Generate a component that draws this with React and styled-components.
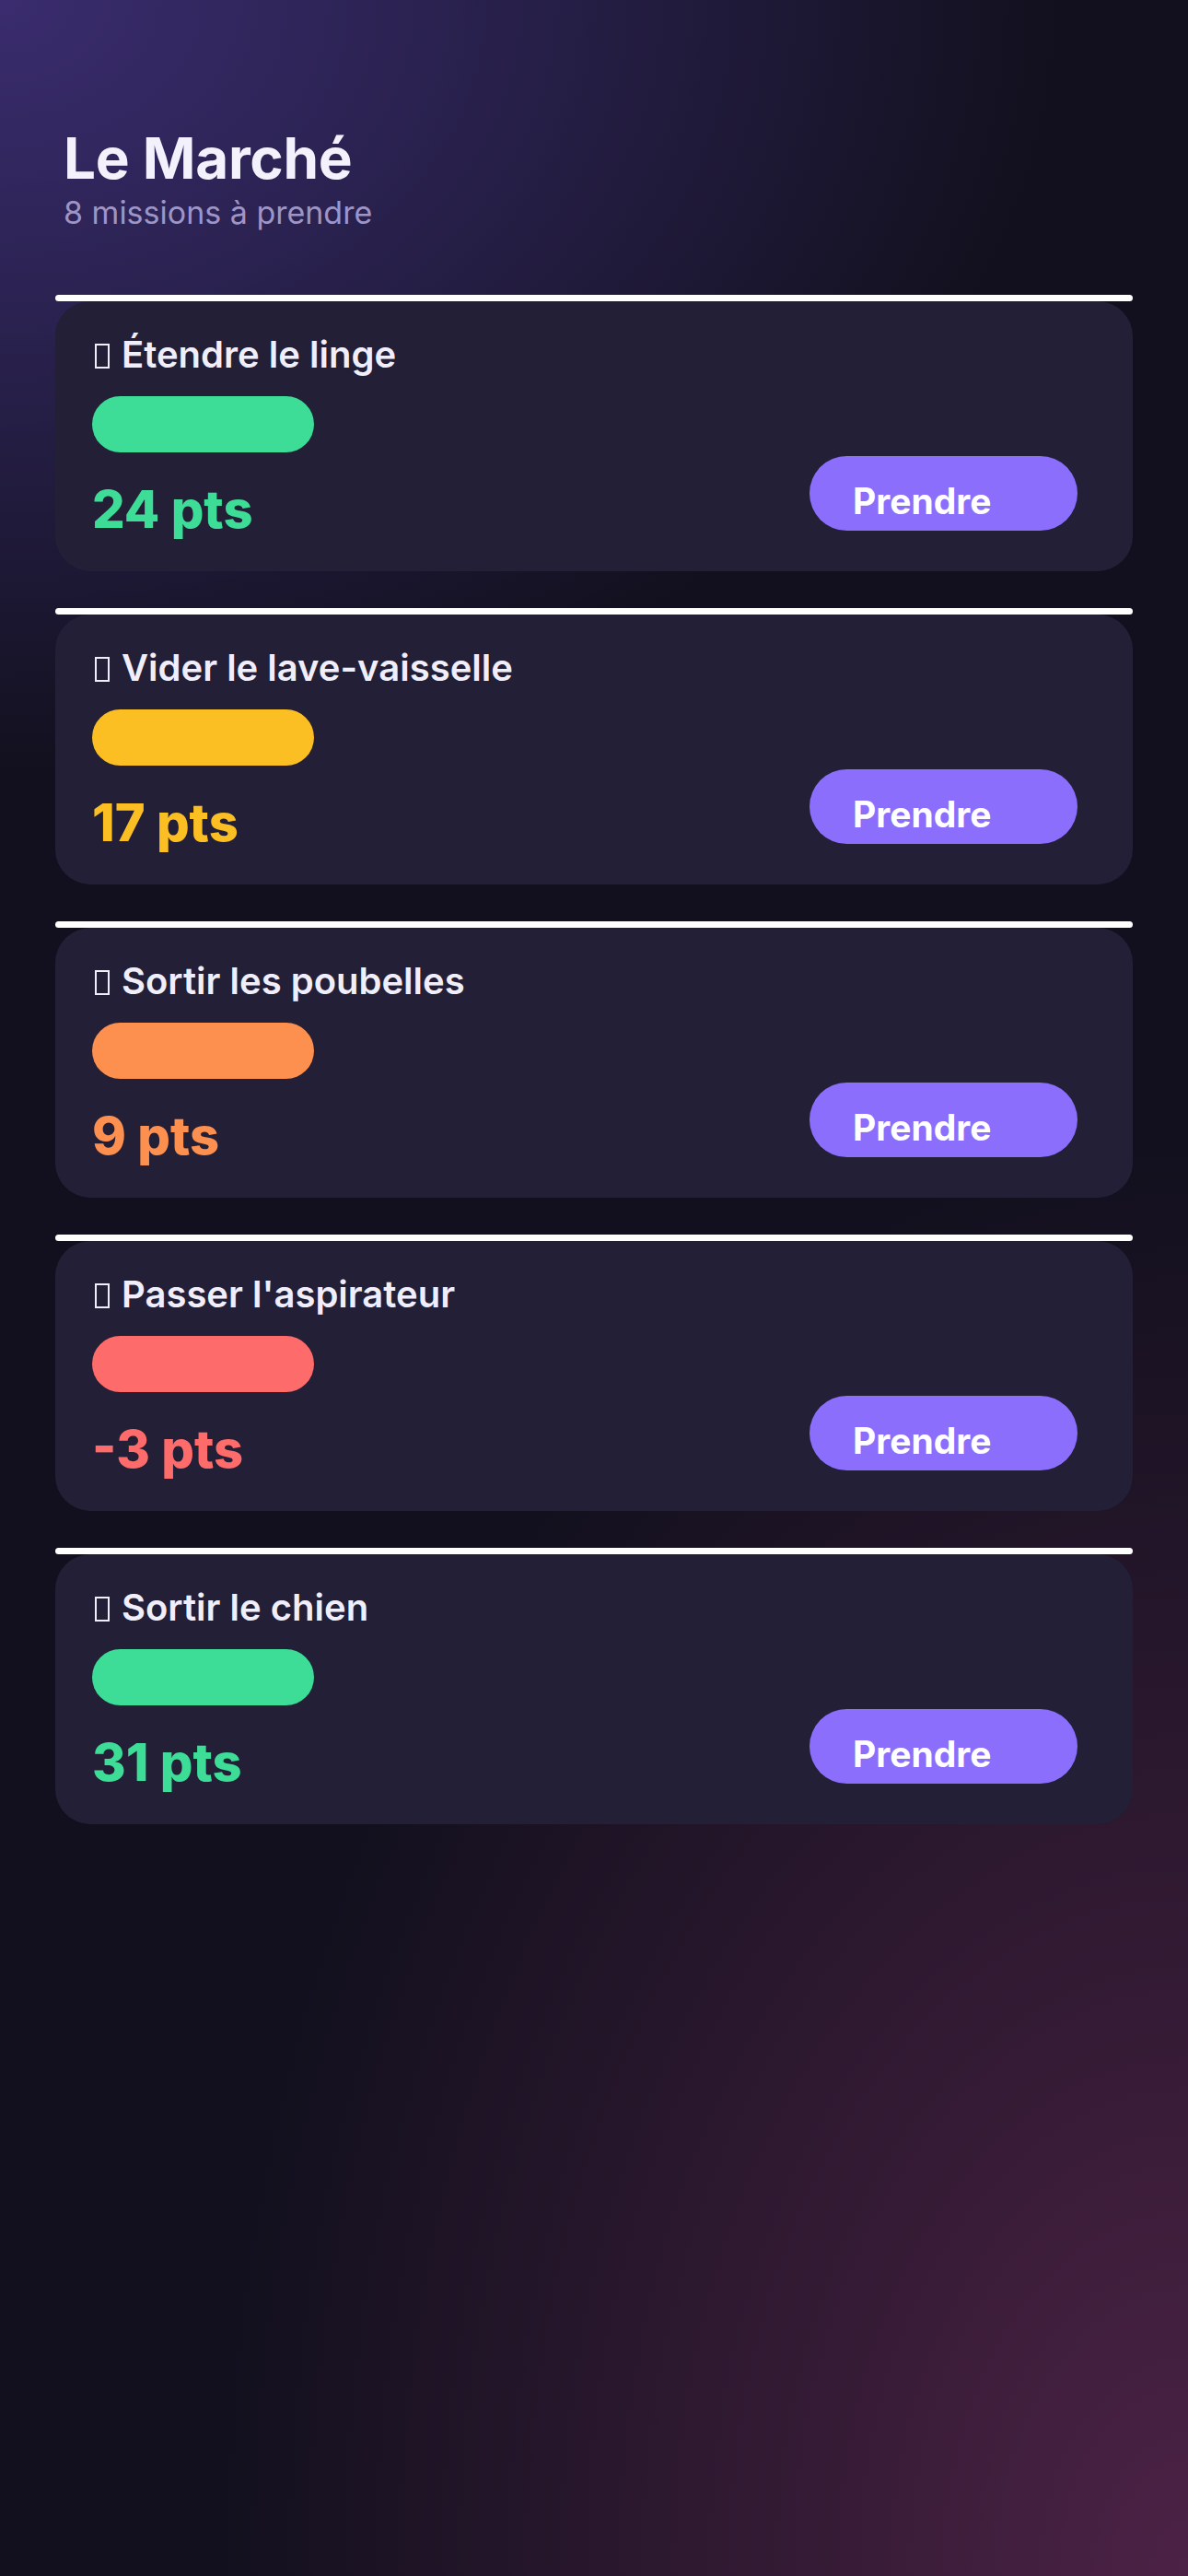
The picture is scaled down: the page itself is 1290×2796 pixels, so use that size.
import React from "react";
import styled, { createGlobalStyle } from "styled-components";

const Global = createGlobalStyle`
  html, body {
    margin: 0;
    padding: 0;
    background: #12101e;
  }
  * { box-sizing: border-box; }
`;

const Page = styled.div`
  min-height: 2796px;
  padding: 135px 60px 80px;
  font-family: Inter, "Noto Sans", sans-serif;
  background:
    radial-gradient(ellipse 1150px 840px at 0% 0%, rgba(58, 44, 110, 1) 0%, rgba(48, 38, 92, 0.82) 40%, rgba(18, 16, 30, 0) 100%),
    radial-gradient(ellipse 1050px 1550px at 100% 100%, rgba(76, 34, 70, 1) 0%, rgba(64, 30, 60, 0.82) 35%, rgba(18, 16, 30, 0) 100%),
    #12101e;
`;

const Header = styled.header`
  display: flex;
  flex-direction: column;
  gap: 2px;
  padding-left: 9px;
  margin-bottom: 68px;
`;

const Title = styled.h1`
  margin: 0;
  font-size: 62px;
  line-height: 1.2;
  font-weight: 700;
  color: #f3f1fb;
  letter-spacing: -0.3px;
`;

const Subtitle = styled.p`
  margin: 0;
  font-size: 34px;
  line-height: 1.2;
  font-weight: 400;
  color: #9d95c6;
`;

const List = styled.div`
  display: flex;
  flex-direction: column;
  gap: 40px;
`;

const Mission = styled.section`
  display: flex;
  flex-direction: column;
`;

const TopRule = styled.div`
  height: 7px;
  background: #ffffff;
  border-radius: 4px;
`;

const Card = styled.div`
  display: flex;
  justify-content: space-between;
  background: #221f36;
  border-radius: 38px;
  padding: 35px 60px 33px 40px;
  height: 293px;
`;

const Info = styled.div`
  display: flex;
  flex-direction: column;
`;

const TaskName = styled.h2`
  margin: 0;
  display: flex;
  align-items: baseline;
  font-size: 40px;
  line-height: 1.17;
  font-weight: 600;
  color: #f1eefb;
`;

const MissingGlyph = styled.span`
  display: inline-block;
  width: 16px;
  height: 27px;
  margin: 0 13px 0 3px;
  border: 2.5px solid #f1eefb;
  align-self: center;
  transform: translateY(1px);
`;

const Bar = styled.div`
  width: 241px;
  height: 61px;
  border-radius: 31px;
  margin-top: 21px;
  background: ${(p) => p.$color};
`;

const Points = styled.div`
  margin-top: 29px;
  font-size: 56px;
  line-height: 1.2;
  font-weight: 800;
  color: ${(p) => p.$color};
`;

const TakeButton = styled.button`
  align-self: flex-end;
  margin-bottom: 11px;
  width: 291px;
  height: 81px;
  border: none;
  border-radius: 41px;
  background: #8b6efb;
  color: #ffffff;
  font-family: Inter, "Noto Sans", sans-serif;
  font-size: 39px;
  font-weight: 700;
  display: flex;
  align-items: center;
  padding: 15px 0 0 47px;
  cursor: pointer;
`;

const missions = [
  { name: "Étendre le linge", pts: "24 pts", color: "#3ddc97" },
  { name: "Vider le lave-vaisselle", pts: "17 pts", color: "#fbbf24" },
  { name: "Sortir les poubelles", pts: "9 pts", color: "#fd8f4f" },
  { name: "Passer l'aspirateur", pts: "-3 pts", color: "#fe6b6b" },
  { name: "Sortir le chien", pts: "31 pts", color: "#3ddc97" },
];

export default function App() {
  return (
    <>
      <Global />
      <Page>
        <Header>
          <Title>Le Marché</Title>
          <Subtitle>8 missions à prendre</Subtitle>
        </Header>
        <List>
          {missions.map((m) => (
            <Mission key={m.name}>
              <TopRule />
              <Card>
                <Info>
                  <TaskName>
                    <MissingGlyph aria-hidden="true" />
                    <span>{m.name}</span>
                  </TaskName>
                  <Bar $color={m.color} />
                  <Points $color={m.color}>{m.pts}</Points>
                </Info>
                <TakeButton>Prendre</TakeButton>
              </Card>
            </Mission>
          ))}
        </List>
      </Page>
    </>
  );
}
